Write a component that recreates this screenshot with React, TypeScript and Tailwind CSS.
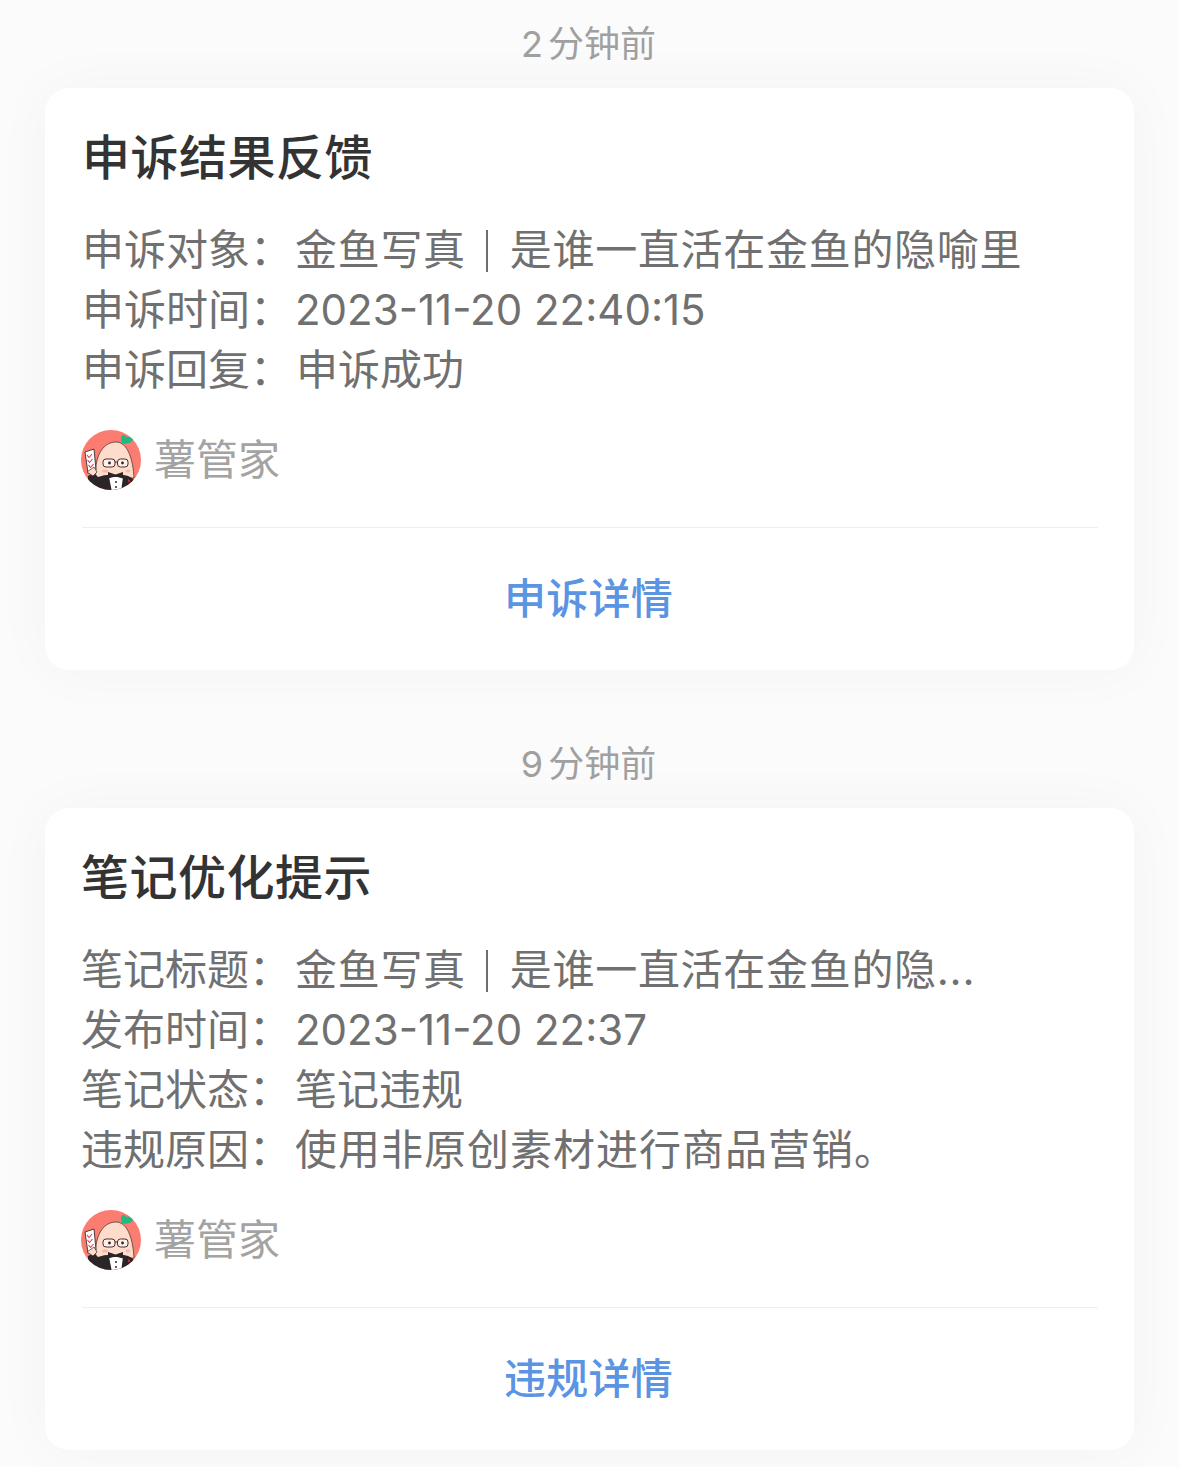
import { Fragment } from "react";

function Avatar() {
  return (
    <svg width="60" height="60" viewBox="0 0 60 60" className="shrink-0">
      <defs>
        <clipPath id="avatar-clip">
          <circle cx="30" cy="30" r="30" />
        </clipPath>
      </defs>
      <g clipPath="url(#avatar-clip)">
        <rect width="60" height="60" fill="#fb7c70" />
        {/* head */}
        <path d="M15 48 C13 30 20 12 35 12 C47 12 52 30 53 48 Z" fill="#fddccb" stroke="#3a2c2c" strokeWidth="0.7" />
        <ellipse cx="24" cy="41" rx="3" ry="1.5" fill="#fbb7a8" />
        <ellipse cx="47" cy="41" rx="2.4" ry="1.4" fill="#fbb7a8" />
        {/* jacket */}
        <path d="M7 62 L7 46 L13 43 L17 47 Q25 44 34 45 Q48 44 53 50 L56 62 Z" fill="#2b2527" />
        {/* shirt */}
        <path d="M28 47 L42 47 L40 62 L31 62 Z" fill="#ffffff" />
        <circle cx="35" cy="52" r="1" fill="#2b2527" />
        <circle cx="35" cy="57" r="1" fill="#2b2527" />
        {/* bow tie */}
        <path d="M27 42 L34.5 44.5 L42 42 L42 48.5 L34.5 46.5 L27 48.5 Z" fill="#2b2527" />
        <path d="M47 49 L49.5 51 L47.5 52.5 Z" fill="#e8343f" />
        {/* glasses */}
        <rect x="22" y="29" width="12" height="8" rx="3" fill="#fff1ea" stroke="#4a2f2f" strokeWidth="1" />
        <rect x="36.5" y="29" width="10.5" height="8" rx="3" fill="#fff1ea" stroke="#4a2f2f" strokeWidth="1" />
        <path d="M34 32 H36.5" stroke="#4a2f2f" strokeWidth="1" />
        <circle cx="28.5" cy="33" r="1.4" fill="#2b2527" />
        <circle cx="41.5" cy="33" r="1.4" fill="#2b2527" />
        {/* leaf */}
        <path d="M41 13 Q38.5 7 41.5 5 Q44.5 4.5 45.5 7 Q48.5 5.5 52 8.5 Q52 12 48 13 Q44 14.5 41 13 Z" fill="#1fb982" />
        {/* arm and clipboard */}
        <path d="M4 22 L13 19 L15 40 L7 43 Z" fill="#ffffff" stroke="#3a2c2c" strokeWidth="0.9" />
        <path d="M6 25 L8 27.5 L11 24 M6.5 30 L8.5 32.5 L11.5 29 M7.5 35 L9.5 37.5 L12.5 34" fill="none" stroke="#e8343f" strokeWidth="1.1" />
        <path d="M6 42 L13 37 L16 42 L12 46 Z" fill="#fddccb" stroke="#3a2c2c" strokeWidth="0.7" />
      </g>
    </svg>
  );
}

type Row = { label: string; value: string; valueClass?: string };

function Value({ text }: { text: string }) {
  // the title separator is shorter than the font's own bar, so it gets drawn as a rule
  return (
    <>
      {text.split(" | ").map((part, i) => (
        <Fragment key={part}>
          {i > 0 && <span className="mr-[22px] ml-5 inline-block h-[42px] w-[2px] -translate-y-[3px] bg-[#6e6e6e] align-middle" />}
          {part}
        </Fragment>
      ))}
    </>
  );
}

function Notice({
  count,
  title,
  rows,
  action,
  inset,
  labelWidth,
  cardHeight,
}: {
  count: string;
  title: string;
  rows: Row[];
  action: string;
  inset: string;
  labelWidth: string;
  cardHeight: string;
}) {
  return (
    <section className="flex flex-col">
      <div className="flex h-[88px] items-center justify-center pr-[2px] text-[36px] leading-[44px] text-[#a0a0a0]">
        <span>{count}</span>
        <span className="ml-[5px]">分钟前</span>
      </div>
      <div className={`mx-[45px] flex flex-col rounded-[24px] bg-white pt-10 shadow-[0_0_60px_rgba(0,0,0,0.035)] ${cardHeight}`}>
        <h2 className={`text-[48px] leading-[60px] font-medium tracking-[0.5px] text-[#333333] ${inset}`}>{title}</h2>
        <div className={`mt-8 flex flex-col ${inset}`}>
          {rows.map((row) => (
            <div key={row.label} className="flex h-[60px] items-center text-[42px] leading-[60px] text-[#707070]">
              <span className={`shrink-0 whitespace-nowrap ${labelWidth}`}>{row.label}</span>
              <span className={`whitespace-nowrap ${row.valueClass ?? ""}`}>
                <Value text={row.value} />
              </span>
            </div>
          ))}
        </div>
        <div className="mt-[30px] flex items-center gap-[13px] pl-9">
          <Avatar />
          <span className="text-[42px] leading-[60px] text-[#a3a3a3]">薯管家</span>
        </div>
        <div className="mt-[37px] mr-9 ml-[37px] h-px bg-[#eeeeee]" />
        <div className="flex flex-1 items-center justify-center pr-[2px] pb-[2px] text-[42px] font-medium tracking-[0.3px] text-[#5b94e3]">{action}</div>
      </div>
    </section>
  );
}

export default function App() {
  return (
    <div
      className="flex h-[1467px] flex-col overflow-hidden bg-[#fbfbfb]"
      style={{ fontFamily: 'Inter, "Noto Sans CJK SC", sans-serif' }}
    >
      <Notice
        count="2"
        title="申诉结果反馈"
        inset="pl-[37px]"
        labelWidth="w-[213px]"
        cardHeight="h-[582px]"
        action="申诉详情"
        rows={[
          { label: "申诉对象：", value: "金鱼写真 | 是谁一直活在金鱼的隐喻里", valueClass: "tracking-[0.7px]" },
          { label: "申诉时间：", value: "2023-11-20 22:40:15" },
          { label: "申诉回复：", value: "申诉成功", valueClass: "pl-px" },
        ]}
      />
      <div className="h-[50px] shrink-0" />
      <Notice
        count="9"
        title="笔记优化提示"
        inset="pl-9"
        labelWidth="w-[214px]"
        cardHeight="h-[642px]"
        action="违规详情"
        rows={[
          { label: "笔记标题：", value: "金鱼写真 | 是谁一直活在金鱼的隐...", valueClass: "tracking-[0.7px]" },
          { label: "发布时间：", value: "2023-11-20 22:37" },
          { label: "笔记状态：", value: "笔记违规" },
          { label: "违规原因：", value: "使用非原创素材进行商品营销。", valueClass: "tracking-[1px]" },
        ]}
      />
    </div>
  );
}
